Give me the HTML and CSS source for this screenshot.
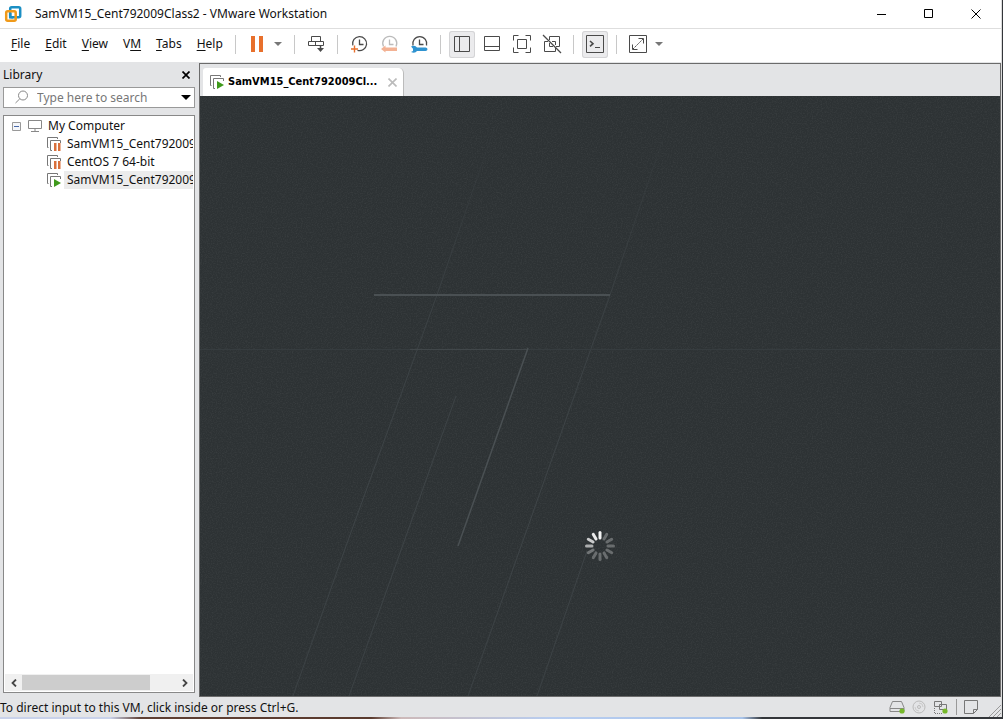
FILE: index.html
```html
<!DOCTYPE html>
<html lang="en">
<head>
<meta charset="utf-8">
<title>SamVM15_Cent792009Class2 - VMware Workstation</title>
<link rel="stylesheet" href="styles.css">
</head>
<body>
<svg class="defs" aria-hidden="true">
  <symbol id="vm-stack" viewBox="0 0 16 16"><path d="M2.5 11.500H1.500V1.500H11.500V3" fill="none" stroke="#777"/><path d="M6 14.500H4.500V4.500H14.500V7" fill="none" stroke="#777"/></symbol>
  <symbol id="vm-paused" viewBox="0 0 16 16"><use href="#vm-stack"/><path d="M7 7h8v9H7z" fill="#fff"/><path d="M8 7h2.500v8H8zM12 7h2.500v8H12z" fill="#d9703c"/></symbol>
  <symbol id="vm-running" viewBox="0 0 16 16"><use href="#vm-stack"/><path d="M8 7v8l7-4z" fill="#3f9a1c"/></symbol>
</svg>
<div class="window">
  <header class="titlebar">
    <svg class="logo" width="18" height="18" viewBox="0 0 18 18" fill="none" stroke-width="2.500">
      <rect x="6.200" y="2.200" width="10" height="10" rx="1.500" stroke="#1b8fc4"/>
      <rect x="2.200" y="6.200" width="9.500" height="9.500" rx="1.500" stroke="#f09a1a"/>
      <path d="M6.200 8v4.200h3" stroke="#1b8fc4"/>
    </svg>
    <h1 class="title">SamVM15_Cent792009Class2 - VMware Workstation</h1>
    <div class="controls">
      <button class="control" aria-label="Minimize"><svg width="10" height="10"><path d="M0 5.500h9" stroke="#000"/></svg></button>
      <button class="control" aria-label="Maximize"><svg width="10" height="10"><path d="M.5.500h8v8h-8z" fill="none" stroke="#000"/></svg></button>
      <button class="control" aria-label="Close"><svg width="10" height="10"><path d="M.5.500l9 9M9.500.500l-9 9" stroke="#000"/></svg></button>
    </div>
  </header>
  <div class="toolbar">
    <nav class="menu">
      <button><u>F</u>ile</button><button><u>E</u>dit</button><button><u>V</u>iew</button><button>V<u>M</u></button><button><u>T</u>abs</button><button><u>H</u>elp</button>
    </nav>
    <span class="sep"></span>
    <button class="tool" aria-label="Suspend"><svg viewBox="0 0 26 27"><path d="M7 5h4v16H7zM15 5h4v16h-4z" fill="#e8702c"/></svg></button>
    <button class="caret" aria-label="Power options"><svg width="8" height="4"><path d="M0 0h8L4 4z" fill="#777"/></svg></button>
    <span class="sep"></span>
    <button class="tool" aria-label="Send Ctrl+Alt+Del"><svg viewBox="0 0 26 27"><path d="M8.500 5.500h9v5h-9zM13.500 14.500h-8v-4h7v4M12.500 10.500h8v4h-8"/><path d="M17.500 14v5" stroke-width="1.500"/><path d="M14 17h7l-3.500 4z" fill="#4a4a4a" stroke="none"/></svg></button>
    <span class="sep"></span>
    <button class="tool" aria-label="Take snapshot"><svg viewBox="0 0 26 27"><path d="M6.800 14.300A7 7 0 1 1 11.500 19.300M13.500 8.500v5h4" stroke-width="1.300"/><path d="M8.500 14.500v7M5 18h7" stroke="#e8702c" stroke-width="1.400"/></svg></button>
    <button class="tool" aria-label="Revert snapshot"><svg viewBox="0 0 26 27"><path d="M7.500 15.500A7 7 0 1 1 20 15.500M13.500 8.500v5h4" stroke="#bbb" stroke-width="1.300"/><path d="M5 18l4.500-3.500V16.500H21v3.500H9.500v1.500z" fill="#f3b294" stroke="none"/></svg></button>
    <button class="tool" aria-label="Manage snapshots"><svg viewBox="0 0 26 27"><path d="M7 14.500A7 7 0 1 1 20.500 14.500M13.500 8.500v5h4" stroke-width="1.300"/><path d="M5 15.500q4-2 6 1h8.500q2 0 2 1.800t-2 1.800H11q-2 2.800-6 1l2-1.200v-2.200z" fill="#2f93d0" stroke="none"/></svg></button>
    <span class="sep"></span>
    <button class="tool on" aria-label="Library" aria-pressed="true"><svg viewBox="0 0 26 27"><path d="M5.500 5.500h15v15h-15zM10.500 5.500v15"/></svg></button>
    <button class="tool" aria-label="Thumbnail bar"><svg viewBox="0 0 26 27"><path d="M5.500 5.500h15v14h-15zM5.500 15.500h15"/></svg></button>
    <button class="tool" aria-label="Full screen"><svg viewBox="0 0 26 27"><path d="M8.500 8.500h9v9h-9zM4.500 9.500v-5h5M16.500 4.500h5v5M21.500 16.500v5h-5M9.500 21.500h-5v-5"/></svg></button>
    <button class="tool" aria-label="Unity"><svg viewBox="0 0 26 27"><path d="M9 10.500H5.500v10h11V17M10.500 9V5.500h10v10H17M13 10.500h3.500V14M10.500 12v3.500H14"/><path d="M4 4l18 18" stroke-width="1.300"/></svg></button>
    <span class="sep"></span>
    <button class="tool on" aria-label="Console view" aria-pressed="true"><svg viewBox="0 0 26 27"><path d="M4.500 4.500h17v17h-17zM13 16.500h5"/><path d="M8 10l3 2.700-3 2.700" stroke-width="1.600"/></svg></button>
    <span class="sep"></span>
    <button class="tool" aria-label="Stretch"><svg viewBox="0 0 26 27"><path d="M4.500 4.500h17v17h-17zM13.500 7.500h5v5M7.500 13.500v5h5"/><path d="M8 18L18 8" stroke-dasharray="2 1"/></svg></button>
    <button class="caret" aria-label="Stretch options"><svg width="8" height="4"><path d="M0 0h8L4 4z" fill="#777"/></svg></button>
  </div>
  <div class="body">
    <aside class="library">
      <div class="library-head"><h2>Library</h2><button aria-label="Close library"><svg width="8" height="8"><path d="M.5.500l7 7M7.500.500l-7 7" stroke="#000" stroke-width="1.700"/></svg></button></div>
      <div class="search">
        <svg width="15" height="15" fill="none" stroke="#888"><circle cx="9" cy="5.500" r="4.500"/><path d="M5.800 8.800L1.500 13"/></svg>
        <input type="text" aria-label="Search library" placeholder="Type here to search">
        <button aria-label="Search options"><svg width="10" height="5"><path d="M0 0h10L5 5z"/></svg></button>
      </div>
      <div class="tree">
        <ul>
          <li class="row root">
            <svg width="9" height="9" fill="#f4f6fa" stroke="#999"><path d="M.5.500h8v8h-8z"/><path d="M2 4.500h5" stroke="#4868a8"/></svg>
            <svg width="14" height="12" fill="none" stroke="#888"><path d="M.5.500h13v8H.500zM7 9v2M3 11.500h8"/></svg>
            <span>My Computer</span></li>
          <li class="row vm"><svg width="16" height="16"><use href="#vm-paused"/></svg><span>SamVM15_Cent792009</span></li>
          <li class="row vm"><svg width="16" height="16"><use href="#vm-paused"/></svg><span>CentOS 7 64-bit</span></li>
          <li class="row vm"><svg width="16" height="16"><use href="#vm-running"/></svg><span class="selected">SamVM15_Cent792009</span></li>
        </ul>
        <div class="hscroll">
          <button aria-label="Scroll left"><svg width="6" height="8"><path d="M5 .5L1.500 4 5 7.500" fill="none" stroke="#444" stroke-width="1.800"/></svg></button>
          <div class="track"><div class="thumb"></div></div>
          <button aria-label="Scroll right"><svg width="6" height="8"><path d="M1 .5L4.500 4 1 7.500" fill="none" stroke="#444" stroke-width="1.800"/></svg></button>
        </div>
      </div>
    </aside>
    <main class="workspace">
      <div class="tabs"><div class="tab"><svg width="16" height="16"><use href="#vm-running"/></svg><span>SamVM15_Cent792009Cl...</span><button aria-label="Close tab"><svg width="9" height="9"><path d="M.5.500l8 8M8.500.500l-8 8" stroke="#bbb" stroke-width="1.600"/></svg></button></div></div>
      <div class="screen">
        <svg viewBox="0 0 800 600" preserveAspectRatio="xMidYMid slice" fill="none">
          <defs>
            <linearGradient id="fade" gradientUnits="userSpaceOnUse" x1="0" y1="0" x2="0" y2="600"><stop offset="0" stop-color="#3b4144" stop-opacity="0"/><stop offset=".35" stop-color="#3b4144"/><stop offset=".7" stop-color="#3e4447"/><stop offset="1" stop-color="#3b4144"/></linearGradient>
            <filter id="grain" x="0" y="0" width="100%" height="100%"><feTurbulence type="fractalNoise" baseFrequency=".8" numOctaves="2"/><feColorMatrix values="0 0 0 0 1  0 0 0 0 1  0 0 0 0 1  .12 0 0 0 -.05"/></filter>
          </defs>
          <rect width="800" height="600" filter="url(#grain)"/>
          <g stroke="url(#fade)">
            <path d="M295 30L237 199 146 450 93 600M256 300L149 600M474 10L410 199 268 600M387 455L337 600"/>
          </g>
          <path d="M0 253.500h800" stroke="#363c3f"/>
          <path d="M210 253.500h118" stroke="#41474a"/>
          <path d="M328 252L258 450" stroke="#4a5053" stroke-width="1.500"/>
          <path d="M174 199h236" stroke="#4a5053" stroke-width="2"/>
          <g stroke-width="3" stroke-linecap="round" stroke="#fff" transform="translate(400 450)">
            <path d="M0-8V-13.500" opacity=".95"/>
            <path d="M0-8V-13.500" opacity=".28" transform="rotate(30)"/>
            <path d="M0-8V-13.500" opacity=".28" transform="rotate(60)"/>
            <path d="M0-8V-13.500" opacity=".28" transform="rotate(90)"/>
            <path d="M0-8V-13.500" opacity=".28" transform="rotate(120)"/>
            <path d="M0-8V-13.500" opacity=".28" transform="rotate(150)"/>
            <path d="M0-8V-13.500" opacity=".28" transform="rotate(180)"/>
            <path d="M0-8V-13.500" opacity=".28" transform="rotate(210)"/>
            <path d="M0-8V-13.500" opacity=".32" transform="rotate(240)"/>
            <path d="M0-8V-13.500" opacity=".6" transform="rotate(270)"/>
            <path d="M0-8V-13.500" opacity=".75" transform="rotate(300)"/>
            <path d="M0-8V-13.500" opacity=".9" transform="rotate(330)"/>
          </g>
        </svg>
      </div>
    </main>
  </div>
  <footer class="status">
    <p>To direct input to this VM, click inside or press Ctrl+G.</p>
    <svg width="16" height="14" fill="none" stroke="#888"><path d="M1 7.500L3.500 1.500h9L15 7.500v4H1zM1 8.500h14"/><circle cx="13" cy="11" r="2.600" fill="#76b82a" stroke="none"/></svg>
    <svg width="14" height="14" fill="none" stroke="#bbb"><circle cx="7" cy="7" r="6"/><circle cx="7" cy="7" r="1.500"/><path d="M7 3a4 4 0 0 1 4 4M7 11a4 4 0 0 1-4-4" stroke="#ccc"/></svg>
    <svg width="16" height="14" fill="none" stroke="#777"><path d="M1.500 1.500h7v5h-7zM6.500 4.500h7v5h-7z"/><path d="M1.500 8v5.500h8" stroke-dasharray="1 1"/><circle cx="12" cy="11" r="2.600" fill="#76b82a" stroke="none"/></svg>
    <span class="status-sep"></span>
    <svg class="note" width="14" height="14" fill="none" stroke="#777"><path d="M.5.500h13v9l-4 4H.500zM13.500 9.500h-4v4"/></svg>
    <svg class="grip" width="12" height="12" stroke="#999"><path d="M0 12L12 0M4 12l8-8M8 12l4-4"/></svg>
  </footer>
</div>
</body>
</html>
```
FILE: styles.css
```css
* { box-sizing: border-box; }
body { margin: 0; height: 100vh; display: flex; padding: 0 1px 2px 0; background: linear-gradient(90deg, #c9d2ea 11%, #5f4034 14%, #5a3a2e 37%, #cdb9b9 40%, #b8cdf0 55%, #a9c4ea 74%, #33363a 76%); font: 12px/18px "Noto Sans", "Open Sans", sans-serif; color: #111; }
button { border: 0; padding: 0; margin: 0; background: none; font: inherit; color: inherit; display: flex; align-items: center; justify-content: center; }
h1, h2, p, ul { margin: 0; padding: 0; font-size: 12px; font-weight: 400; list-style: none; }
svg { display: block; flex: none; }
.defs { position: absolute; width: 0; height: 0; }
.window { flex: 1; min-width: 0; display: flex; flex-direction: column; background: #e3e4e6; border-right: 1px solid #dcdcdc; }
.titlebar { display: flex; align-items: center; height: 29px; background: #fff; border-bottom: 1px solid #dedede; padding-left: 4px; }
.title { flex: 1; padding-left: 13px; }
.controls { display: flex; padding-right: 2px; }
.control { width: 47px; height: 28px; }
.toolbar { display: flex; align-items: center; gap: 4px; height: 34px; padding-bottom: 3px; background: #fff; border-bottom: 1px solid #e3e4e6; }
.menu { display: flex; gap: 15px; width: 231px; padding-left: 11px; }
.menu button { display: block; }
.menu u { text-decoration: underline 1px; text-underline-offset: 2px; text-decoration-skip-ink: none; }
.sep { width: 1px; height: 19px; margin: 0 4px; background: #c8c8c8; }
.menu + .sep { margin-left: 0; }
.tool { width: 26px; height: 27px; border-radius: 3px; }
.tool svg { width: 26px; height: 27px; fill: none; stroke: #4a4a4a; }
.tool svg path[fill] { stroke: none; }
.tool.on { background: #ebebed; box-shadow: inset 0 0 0 1px #d4d4d6; }
.caret { width: 12px; height: 27px; justify-content: flex-start; }
.body { flex: 1; display: flex; min-height: 0; }
.library { width: 199px; padding: 0 4px 4px 3px; display: flex; flex-direction: column; }
.library-head { display: flex; align-items: center; justify-content: space-between; height: 24px; padding-right: 5px; }
.search { display: flex; align-items: center; height: 21px; background: #fff; border: 1px solid #999; padding: 0 3px 0 10px; margin-bottom: 7px; }
.search input { flex: 1; min-width: 0; border: 0; padding: 0 0 0 8px; font: inherit; background: none; outline: 0; }
.search input::placeholder { color: #777; opacity: 1; }
.tree { flex: 1; min-height: 0; display: flex; flex-direction: column; justify-content: space-between; background: #fff; border: 1px solid #888; padding: 1px; }
.tree ul { overflow: hidden; }
.row { display: flex; align-items: center; height: 18px; white-space: nowrap; }
.root { padding-left: 7px; gap: 7px; }
.root svg + svg { margin-right: -1px; }
.vm { padding-left: 41px; gap: 2px; }
.vm span { padding-left: 3px; }
.selected { background: #ececec; }
.hscroll { display: flex; height: 17px; background: #f0f0f0; }
.hscroll button { width: 17px; }
.track { flex: 1; padding: 1px 0; }
.thumb { width: 83%; height: 100%; background: #cdcdcd; }
.workspace { flex: 1; min-width: 0; display: flex; flex-direction: column; border: 1px solid #6b6b6b; }
.tabs { height: 32px; display: flex; align-items: flex-end; padding-left: 3px; }
.tab { width: 201px; height: 28px; display: flex; align-items: center; gap: 3px; padding: 0 6px; background: #fff; border-radius: 3px 5px 0 0; border-right: 1px solid #bbb; font: bold 11px/18px "DejaVu Sans Condensed", "DejaVu Sans", sans-serif; color: #000; }
.tab span { flex: 1; white-space: nowrap; }
.screen { flex: 1; min-height: 0; background: #2d3234; }
.screen svg { width: 100%; height: 100%; }
.status { display: flex; align-items: center; height: 20px; gap: 7px; }
.status p { flex: 1; padding-top: 1px; }
.status-sep { width: 1px; height: 16px; background: #999; }
.note { margin-right: 4px; }
.grip { align-self: flex-end; }
```
